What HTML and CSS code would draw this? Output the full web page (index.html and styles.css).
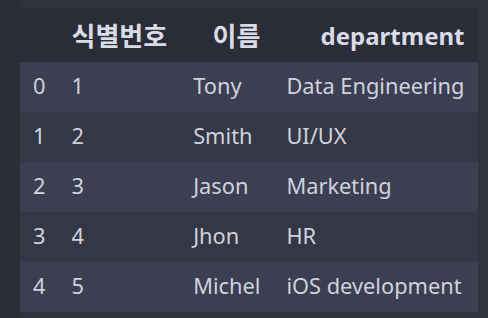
FILE: index.html
```html
<!DOCTYPE html>
<html lang="ko">
<head>
<meta charset="utf-8">
<link rel="stylesheet" href="styles.css">
</head>
<body>
<div class="page">
  <div class="gutter"></div>
  <div class="output">
    <table class="df">
      <thead>
        <tr><th></th><th class="ko">식별번호</th><th class="ko">이름</th><th>department</th></tr>
      </thead>
      <tbody>
        <tr class="odd"><th>0</th><td>1</td><td>Tony</td><td>Data Engineering</td></tr>
        <tr class="even"><th>1</th><td>2</td><td>Smith</td><td>UI/UX</td></tr>
        <tr class="odd"><th>2</th><td>3</td><td>Jason</td><td>Marketing</td></tr>
        <tr class="even"><th>3</th><td>4</td><td>Jhon</td><td>HR</td></tr>
        <tr class="odd"><th>4</th><td>5</td><td>Michel</td><td>iOS development</td></tr>
      </tbody>
    </table>
  </div>
</div>
</body>
</html>
```
FILE: styles.css
```css
html, body {
  margin: 0;
  padding: 0;
  background: #30333e;
}
.page {
  display: flex;
  width: 488px;
  height: 318px;
  overflow: hidden;
}
.gutter {
  width: 20px;
  flex: none;
  background: #2b2e37;
}
.output {
  padding-top: 8px;
}
.df {
  border-collapse: collapse;
  font-family: "Noto Sans", "Noto Sans CJK KR", sans-serif;
  color: #d0d2de;
  font-size: 21.8px;
}
.df thead tr {
  background: #2a2d37;
  height: 54px;
}
.df thead th {
  font-size: 24px;
  font-weight: bold;
  text-align: right;
  padding: 0 13px;
  color: #d9dbe6;
}
.df thead th.ko {
  font-size: 26px;
}
.df tbody tr {
  height: 50px;
}
.df tbody th,
.df tbody td {
  font-weight: normal;
  text-align: left;
  padding: 0 13px 3px;
  white-space: nowrap;
}
.df tr.odd {
  background: #3b3f51;
}
.df tr.even {
  background: #333746;
}
```
